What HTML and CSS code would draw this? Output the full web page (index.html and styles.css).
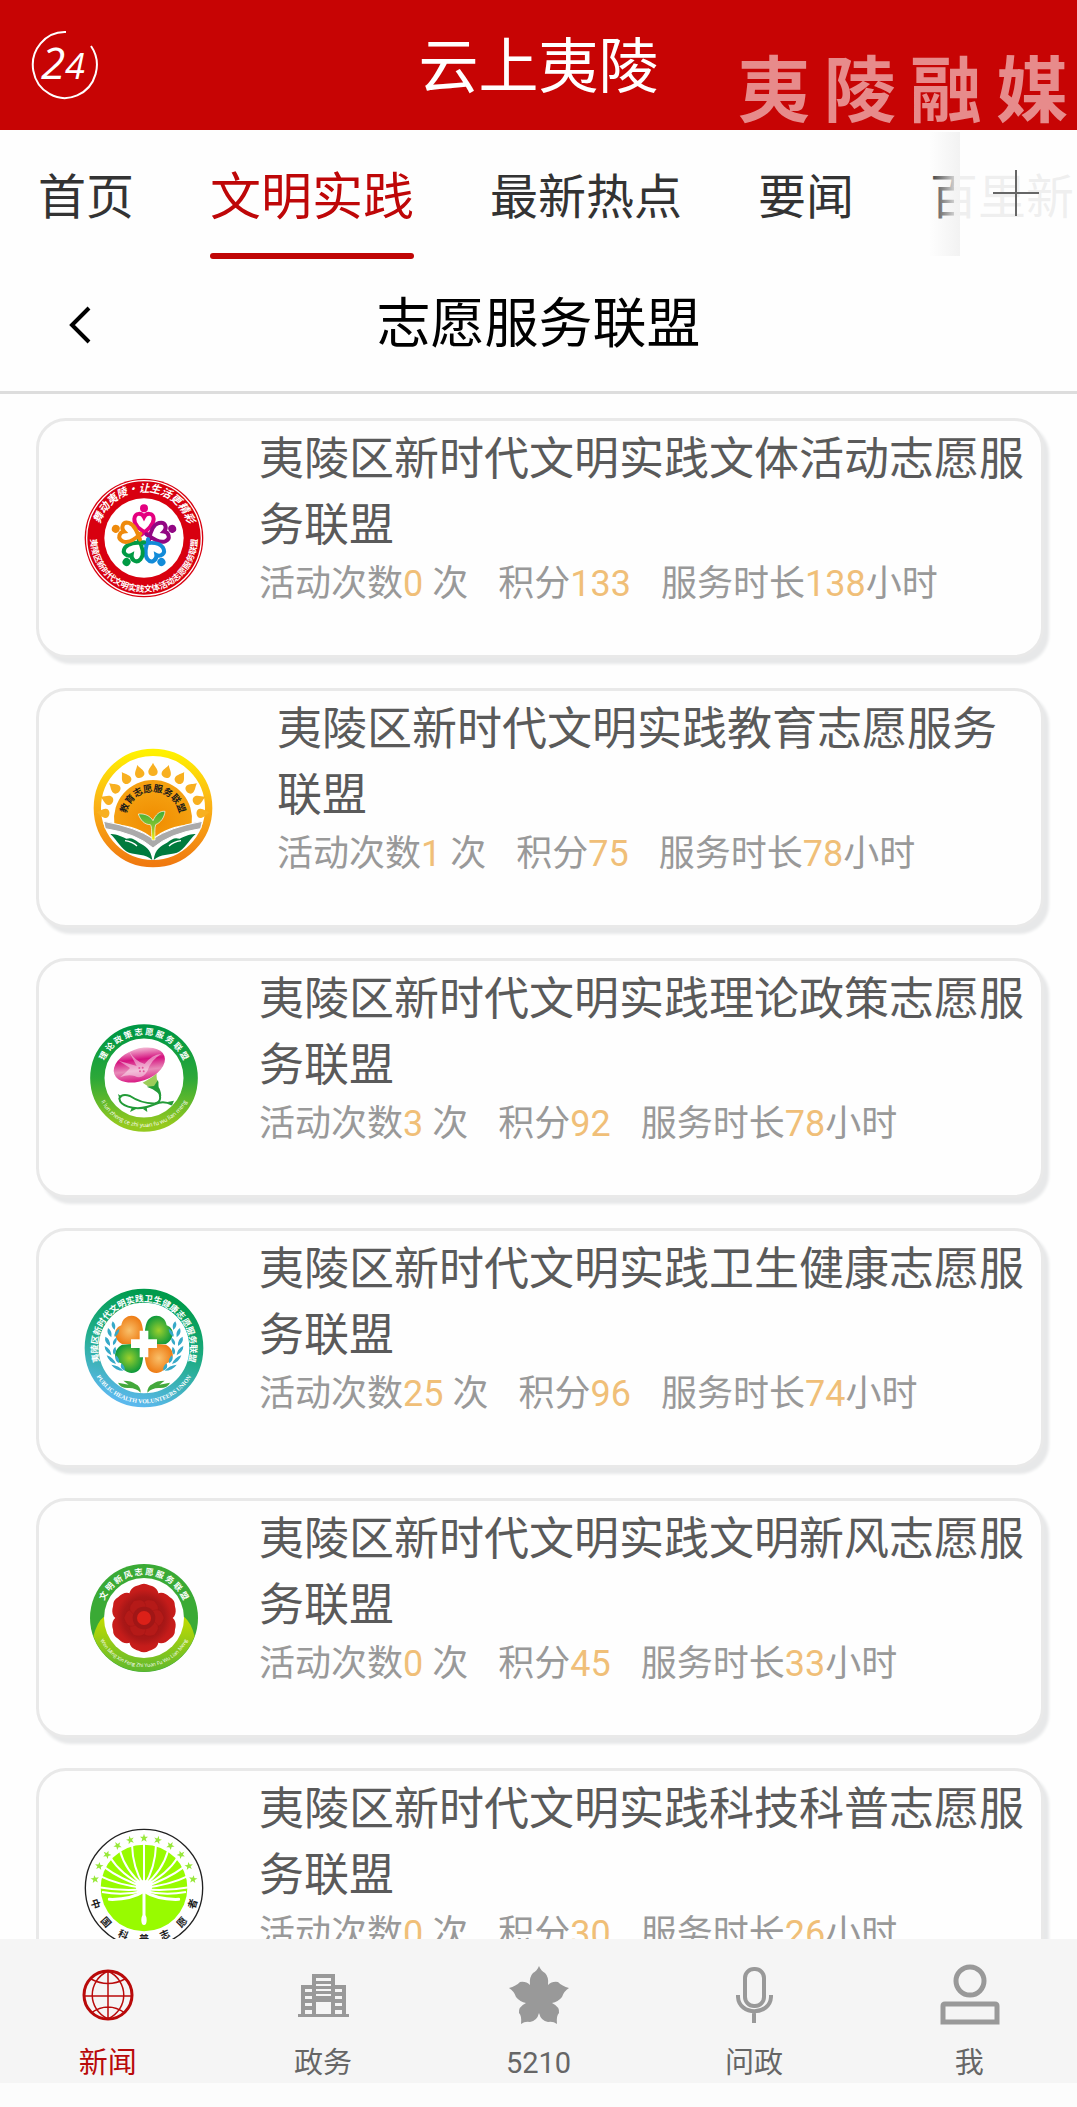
FILE: index.html
```html
<!DOCTYPE html>
<html lang="zh-CN">
<head>
    <meta charset="utf-8">
    <meta name="viewport" content="width=device-width, initial-scale=1">
    <title>云上夷陵</title>
    <link rel="stylesheet" href="styles.css">
</head>
<body>
    <header class="header">
        <svg class="clock" viewBox="0 0 70 70">
            <path d="M35 2A32 33 0 1 0 60 16" fill="none" stroke="#fff" stroke-width="2"/>
            <text x="10" y="49" font-size="44">2</text>
            <text x="34" y="49" font-size="36">4</text>
        </svg>
        <h1 class="app-title">云上夷陵</h1>
        <div class="brand"><span>夷</span><span>陵</span><span>融</span><span>媒</span></div>
    </header>

    <nav class="tabs">
        <a class="tab" href="#">首页</a>
        <a class="tab active" href="#">文明实践</a>
        <a class="tab" href="#">最新热点</a>
        <a class="tab" href="#">要闻</a>
        <a class="tab" href="#">百里新</a>
        <button class="add" type="button" aria-label="更多">
            <svg viewBox="0 0 46 46" width="46" height="46"><path d="M0 23H46M23 0V46" stroke="#666" stroke-width="2"/></svg>
        </button>
    </nav>

    <div class="page-bar">
        <button class="back" type="button" aria-label="返回">
            <svg viewBox="0 0 24 38" width="24" height="38"><path d="M21 2L4 19L21 36" fill="none" stroke="#000" stroke-width="4"/></svg>
        </button>
        <h2 class="page-title">志愿服务联盟</h2>
    </div>

    <main class="list">
        <!-- 文体活动 -->
        <article class="card">
            <div class="logo">
                <svg viewBox="-180 -180 360 360">
                    <defs>
                        <path id="a1" d="M-136 22A138 138 0 1 1 136 22"/>
                        <path id="a2" d="M-159 -16A160 160 0 1 0 159 -16"/>
                        <g id="heart" fill="none" stroke-width="12" stroke-linecap="round">
                            <path d="M9 -14C-8 -22 -30 -38 -29 -57C-27 -78 -6 -75 0 -63C6 -75 28 -78 29 -57C29 -40 12 -26 -8 -10"/>
                        </g>
                    </defs>
                    <circle r="178" fill="#d8000f"/>
                    <circle r="172" fill="none" stroke="#fff" stroke-width="4"/>
                    <circle r="119" fill="#fff"/>
                    <g stroke="#e4007f" fill="#e4007f"><use href="#heart"/><circle cy="-89" r="12" stroke="none"/></g>
                    <g stroke="#920783" fill="#920783" transform="rotate(72)"><use href="#heart"/><circle cy="-89" r="12" stroke="none"/></g>
                    <g stroke="#128bd8" fill="#128bd8" transform="rotate(144)"><use href="#heart"/><circle cy="-89" r="12" stroke="none"/></g>
                    <g stroke="#009a44" fill="#009a44" transform="rotate(216)"><use href="#heart"/><circle cy="-89" r="12" stroke="none"/></g>
                    <g stroke="#ee8a0c" fill="#ee8a0c" transform="rotate(288)"><use href="#heart"/><circle cy="-89" r="12" stroke="none"/></g>
                    <text class="seal-text slant" font-size="32" fill="#fff"><textPath href="#a1" startOffset="50%">舞动夷陵·让生活更精彩</textPath></text>
                    <text class="seal-text" font-size="25" fill="#fff"><textPath href="#a2" startOffset="50%">夷陵区新时代文明实践文体活动志愿服务联盟</textPath></text>
                </svg>
            </div>
            <div class="info">
                <h3 class="name">夷陵区新时代文明实践文体活动志愿服务联盟</h3>
                <p class="meta"><span>活动次数<b>0</b> 次</span><span>积分<b>133</b></span><span>服务时长<b>138</b>小时</span></p>
            </div>
        </article>

        <!-- 教育 -->
        <article class="card">
            <div class="logo wide">
                <svg viewBox="-180 -180 360 360">
                    <defs>
                        <linearGradient id="g2" x2="0" y2="1"><stop stop-color="#fff100"/><stop offset=".45" stop-color="#fbb416"/><stop offset="1" stop-color="#f07a10"/></linearGradient>
                        <radialGradient id="s2" cy=".7"><stop stop-color="#f08c00"/><stop offset="1" stop-color="#f5a010"/></radialGradient>
                        <linearGradient id="p2" x2="0" y2="1"><stop stop-color="#3fae36"/><stop offset=".6" stop-color="#8fc731"/><stop offset="1" stop-color="#fff100"/></linearGradient>
                        <path id="b1" d="M-81 32A81 81 0 0 1 81 32"/>
                        <path id="drop" d="M0 -172C4 -162 14 -154 14 -144C14 -128 -14 -128 -14 -144C-14 -154 -4 -162 0 -172Z"/>
                    </defs>
                    <circle r="167" fill="#fff" stroke="url(#g2)" stroke-width="22"/>
                    <g fill="#f8b020" transform="translate(0 36)">
                        <use href="#drop"/><use href="#drop" transform="rotate(16)"/><use href="#drop" transform="rotate(-16)"/>
                        <use href="#drop" transform="rotate(33)"/><use href="#drop" transform="rotate(-33)"/>
                        <use href="#drop" transform="rotate(50)"/><use href="#drop" transform="rotate(-50)"/>
                        <use href="#drop" transform="rotate(66)"/><use href="#drop" transform="rotate(-66)"/>
                        <use href="#drop" transform="rotate(82)"/><use href="#drop" transform="rotate(-82)"/>
                    </g>
                    <path d="M-116 48A117 117 0 1 1 116 48Q40 54 0 92Q-40 54 -116 48Z" fill="url(#s2)"/>
                    <path d="M-148 40Q-50 58 0 92Q50 58 148 40L143 62Q50 76 0 120Q-50 76 -143 62Z" fill="#aaa" stroke="#fff" stroke-width="3"/>
                    <path d="M-3 96C-6 70 -2 58 -8 50C-26 50 -38 36 -44 18C-24 16 -8 24 0 38C8 20 20 8 36 10C34 30 22 44 8 50C4 62 6 76 6 96Z" fill="url(#p2)" stroke="#fff" stroke-width="2"/>
                    <g fill="#007a3d">
                        <path d="M-128 78C-114 76 -92 86 -80 92C-64 88 -58 92 -42 104C-24 114 -6 122 -2 156C-24 136 -48 142 -72 134C-96 124 -106 98 -128 78Z"/>
                        <path d="M128 78C114 76 92 86 80 92C64 88 58 92 42 104C24 114 6 122 2 156C24 136 48 142 72 134C96 124 106 98 128 78Z"/>
                    </g>
                    <path d="M-84 98Q-60 102 -48 114M84 98Q60 102 48 114" fill="none" stroke="#fff" stroke-width="4"/>
                    <text class="seal-text" font-size="28" fill="#1a1a1a"><textPath href="#b1" startOffset="50%">教育志愿服务联盟</textPath></text>
                </svg>
            </div>
            <div class="info">
                <h3 class="name">夷陵区新时代文明实践教育志愿服务联盟</h3>
                <p class="meta"><span>活动次数<b>1</b> 次</span><span>积分<b>75</b></span><span>服务时长<b>78</b>小时</span></p>
            </div>
        </article>

        <!-- 理论政策 -->
        <article class="card">
            <div class="logo">
                <svg viewBox="-180 -180 360 360">
                    <defs>
                        <linearGradient id="g3" x2="0" y2="1"><stop stop-color="#009844"/><stop offset=".5" stop-color="#2ca838"/><stop offset="1" stop-color="#94c91f"/></linearGradient>
                        <linearGradient id="f3" x1=".7" x2=".3" y2="1"><stop stop-color="#f6c9dc"/><stop offset=".35" stop-color="#d5117f"/><stop offset=".65" stop-color="#e88bb9"/><stop offset="1" stop-color="#d70c7d"/></linearGradient>
                        <path id="c1" d="M-125 36A130 130 0 1 1 125 36"/>
                        <path id="c2" d="M-147 0A147 147 0 0 0 147 0"/>
                    </defs>
                    <circle r="140" fill="#fff" stroke="url(#g3)" stroke-width="43"/>
                    <path d="M-4 14Q24 0 38 -14Q36 6 44 12L40 32L14 26Z" fill="#9ccc5a"/>
                    <ellipse cx="-14" cy="-39" rx="80" ry="48" transform="rotate(-20 -14 -39)" fill="url(#f3)"/>
                    <path d="M-76 -52L-22 -36L-46 -82Q-26 -50 2 -42Q24 -70 52 -72Q20 -54 10 -20Q-6 6 -28 -6Q-48 -12 -72 -2Q-50 -20 -42 -30Z" fill="#fff" opacity=".45"/>
                    <g fill="#e5559d"><circle cx="-14" cy="-30" r="3"/><circle cx="-4" cy="-31" r="3"/><circle cx="-12" cy="-20" r="3"/><circle cx="-1" cy="-20" r="3"/></g>
                    <path d="M36 24Q62 68 34 76Q-6 78 -42 54Q-68 46 -74 62Q-72 78 -48 86Q-10 98 34 78Q58 66 84 80" fill="none" stroke="#239b38" stroke-width="6"/>
                    <path d="M8 26L30 24L42 6L44 28Q50 36 52 54L38 42L26 34ZM-74 62L-78 48L-66 56ZM-36 88L-42 102L-22 92ZM-4 92L10 102L8 88ZM70 72L90 68L84 82Z" fill="#239b38"/>
                    <text class="seal-text" font-size="25" fill="#fff"><textPath href="#c1" startOffset="50%">理 论 政 策 志 愿 服 务 联 盟</textPath></text>
                    <text class="seal-text latin" font-size="17" fill="#fff"><textPath href="#c2" startOffset="50%">li lun zheng ce zhi yuan fu wu lian meng</textPath></text>
                </svg>
            </div>
            <div class="info">
                <h3 class="name">夷陵区新时代文明实践理论政策志愿服务联盟</h3>
                <p class="meta"><span>活动次数<b>3</b> 次</span><span>积分<b>92</b></span><span>服务时长<b>78</b>小时</span></p>
            </div>
        </article>

        <!-- 卫生健康 -->
        <article class="card">
            <div class="logo">
                <svg viewBox="-180 -180 360 360">
                    <defs>
                        <linearGradient id="g4" x1=".6" x2=".3" y2="1"><stop stop-color="#009b4c"/><stop offset=".5" stop-color="#22ad8c"/><stop offset="1" stop-color="#5bb8ec"/></linearGradient>
                        <radialGradient id="o4"><stop stop-color="#f9c06a"/><stop offset="1" stop-color="#ee7d16"/></radialGradient>
                        <radialGradient id="n4"><stop stop-color="#9ed02c"/><stop offset="1" stop-color="#0f9a3c"/></radialGradient>
                        <path id="d1" d="M-120 70A139 139 0 1 1 120 70"/>
                        <path id="d2" d="M-166 0A166 166 0 0 0 166 0"/>
                        <path id="clover" d="M-2 -8L-66 -12C-92 -26 -94 -58 -68 -68C-64 -100 -28 -106 -12 -84C0 -66 -2 -30 -2 -8Z"/>
                        <path id="laurel" d="M-94 -80Q-102 -66 -88 -54Q-82 -70 -94 -80ZM-108 -60Q-114 -42 -98 -32Q-94 -50 -108 -60ZM-116 -34Q-120 -16 -102 -6Q-100 -26 -116 -34ZM-118 -6Q-118 12 -98 22Q-100 2 -118 -6ZM-112 22Q-106 42 -84 48Q-92 28 -112 22ZM-98 50Q-86 68 -62 68Q-76 52 -98 50ZM-74 -58Q-92 -48 -88 -34Q-74 -42 -74 -58ZM-82 -32Q-98 -20 -92 -8Q-80 -16 -82 -32ZM-86 -4Q-98 8 -90 20Q-80 12 -86 -4ZM-84 22Q-90 36 -76 46Q-70 34 -84 22ZM-68 46Q-74 62 -58 68Q-56 54 -68 46Z"/>
                    </defs>
                    <circle r="157" fill="#fff" stroke="url(#g4)" stroke-width="42"/>
                    <use href="#clover" fill="url(#o4)"/>
                    <use href="#clover" fill="url(#n4)" transform="scale(-1 1)"/>
                    <use href="#clover" fill="url(#n4)" transform="translate(0 -22) scale(1 -1)"/>
                    <use href="#clover" fill="url(#o4)" transform="translate(0 -22) scale(-1 -1)"/>
                    <path d="M-13 -52H13V-26H39V0H13V28H-13V0H-39V-26H-13Z" fill="#fff"/>
                    <use href="#laurel" fill="#36a9c8"/>
                    <use href="#laurel" fill="#36a9c8" transform="scale(-1 1)"/>
                    <path id="palm" d="M-78 104L-46 110L-62 98Q-36 98 -26 108Q-10 114 -10 134Q-24 120 -44 120Q-70 122 -78 104Z" fill="#43a83c"/>
                    <use href="#palm" transform="scale(-1 1)"/>
                    <text class="seal-text serif" font-size="26" fill="#fff"><textPath href="#d1" startOffset="50%">夷陵区新时代文明实践卫生健康志愿服务联盟</textPath></text>
                    <text class="seal-text serif" font-size="18" fill="#fff"><textPath href="#d2" startOffset="50%">PUBLIC HEALTH VOLUNTEERS UNION</textPath></text>
                </svg>
            </div>
            <div class="info">
                <h3 class="name">夷陵区新时代文明实践卫生健康志愿服务联盟</h3>
                <p class="meta"><span>活动次数<b>25</b> 次</span><span>积分<b>96</b></span><span>服务时长<b>74</b>小时</span></p>
            </div>
        </article>

        <!-- 文明新风 -->
        <article class="card">
            <div class="logo">
                <svg viewBox="-180 -180 360 360">
                    <defs>
                        <linearGradient id="g5" x2="0" y2="1"><stop stop-color="#c3dc00"/><stop offset="1" stop-color="#5fb82e"/></linearGradient>
                        <radialGradient id="r5" gradientUnits="userSpaceOnUse" cx="0" cy="0" r="105"><stop stop-color="#d41f1c"/><stop offset=".3" stop-color="#a01515"/><stop offset=".6" stop-color="#a81717"/><stop offset=".8" stop-color="#c41c1a"/><stop offset="1" stop-color="#cc1c1a"/></radialGradient>
                        <path id="petal" d="M-22 -30C-58 -66 -44 -92 -16 -98Q0 -108 16 -98C44 -92 58 -66 22 -30Z"/>
                        <path id="petal-in" d="M-14 -14C-36 -44 -20 -54 0 -60C20 -54 36 -44 14 -14Z"/>
                    </defs>
                    <circle r="162" fill="#3aaa35"/>
                    <path d="M-152 55Q-140 10 -120 -4Q-100 60 0 84Q100 60 120 -4Q142 14 152 55A162 162 0 0 1 -152 55Z" fill="url(#g5)"/>
                    <circle r="120" fill="#fff"/>
                    <g fill="url(#r5)">
                        <use href="#petal"/><use href="#petal" transform="rotate(60)"/><use href="#petal" transform="rotate(120)"/>
                        <use href="#petal" transform="rotate(180)"/><use href="#petal" transform="rotate(240)"/><use href="#petal" transform="rotate(300)"/>
                    </g>
                    <g fill="#b51a18" stroke="#9c1515" stroke-width="1">
                        <use href="#petal-in" transform="rotate(30)"/><use href="#petal-in" transform="rotate(90)"/><use href="#petal-in" transform="rotate(150)"/>
                        <use href="#petal-in" transform="rotate(210)"/><use href="#petal-in" transform="rotate(270)"/><use href="#petal-in" transform="rotate(330)"/>
                    </g>
                    <circle r="34" fill="#a01616"/>
                    <circle r="21" fill="#dc2018"/>
                    <text class="seal-text" font-size="25" fill="#fff"><textPath href="#c1" startOffset="50%">文 明 新 风 志 愿 服 务 联 盟</textPath></text>
                    <text class="seal-text latin" font-size="15" fill="#fff"><textPath href="#c2" startOffset="50%">Wen Ming Xin Feng Zhi Yuan Fu Wu Lian Meng</textPath></text>
                </svg>
            </div>
            <div class="info">
                <h3 class="name">夷陵区新时代文明实践文明新风志愿服务联盟</h3>
                <p class="meta"><span>活动次数<b>0</b> 次</span><span>积分<b>45</b></span><span>服务时长<b>33</b>小时</span></p>
            </div>
        </article>

        <!-- 科技科普 -->
        <article class="card">
            <div class="logo">
                <svg viewBox="-180 -180 360 360">
                    <defs>
                        <path id="star" d="M0 -163L3 -154L12 -154L5 -148L8 -139L0 -144L-8 -139L-5 -148L-12 -154L-3 -154Z"/>
                    </defs>
                    <circle r="176" fill="#fff" stroke="#222" stroke-width="4"/>
                    <circle r="130" fill="#98fb00"/>
                    <g fill="#98e83a">
                        <use href="#star"/><use href="#star" transform="rotate(16)"/><use href="#star" transform="rotate(-16)"/>
                        <use href="#star" transform="rotate(32)"/><use href="#star" transform="rotate(-32)"/>
                        <use href="#star" transform="rotate(48)"/><use href="#star" transform="rotate(-48)"/>
                        <use href="#star" transform="rotate(64)"/><use href="#star" transform="rotate(-64)"/>
                        <use href="#star" transform="rotate(80)"/><use href="#star" transform="rotate(-80)"/>
                    </g>
                    <g fill="none" stroke="#fff" stroke-width="6">
                        <path d="M0 -6V-134"/>
                        <path id="rays" d="M0 -6Q34 -60 36 -130M0 -6Q56 -52 72 -112M0 -4Q72 -44 100 -90M0 -2Q76 -30 118 -62M0 0Q80 -10 128 -34M0 4Q70 10 136 -2M0 8Q60 24 126 12"/>
                        <use href="#rays" transform="scale(-1 1)"/>
                        <path d="M0 10Q40 36 104 34M0 10Q-40 36 -104 34" stroke-width="9" stroke-linecap="round"/>
                        <path d="M0 0V96" stroke-width="9"/>
                    </g>
                    <ellipse cy="-4" rx="25" ry="20" fill="#fff"/>
                    <ellipse cy="96" rx="8" ry="15" fill="#fff"/>
                    <g class="seal-text" font-size="30" fill="#222">
                        <text y="164" transform="rotate(72)">中</text>
                        <text y="164" transform="rotate(48)">国</text>
                        <text y="164" transform="rotate(24)">科</text>
                        <text y="164">普</text>
                        <text y="164" transform="rotate(-24)">志</text>
                        <text y="164" transform="rotate(-48)">愿</text>
                        <text y="164" transform="rotate(-72)">者</text>
                    </g>
                </svg>
            </div>
            <div class="info">
                <h3 class="name">夷陵区新时代文明实践科技科普志愿服务联盟</h3>
                <p class="meta"><span>活动次数<b>0</b> 次</span><span>积分<b>30</b></span><span>服务时长<b>26</b>小时</span></p>
            </div>
        </article>
    </main>

    <nav class="bottom-nav">
        <a class="nav-item active" href="#">
            <svg viewBox="0 0 62 62" fill="none" stroke="currentColor">
                <circle cx="31" cy="32" r="24" stroke-width="3"/>
                <path d="M31 8V56M7 33H55M31 8C10 18 10 46 31 56M31 8C52 18 52 46 31 56M14 16Q31 25 48 16M14 50Q31 38 48 50" stroke-width="1.5"/>
            </svg>
            新闻
        </a>
        <a class="nav-item" href="#">
            <svg viewBox="0 0 62 62">
                <path fill="currentColor" fill-rule="evenodd" d="M20 11H43V22H54V51H57V54H6V51H9V22H20ZM24 15V18H39V15ZM24 21V23H39V21ZM24 26V28H39V26ZM24 31V33H39V31ZM24 39V51H39V39ZM13 26V29H20V26ZM13 33V36H20V33ZM13 40V43H20V40ZM13 47V51H20V47ZM43 26V29H50V26ZM43 33V36H50V33ZM43 40V43H50V40ZM43 47V51H50V47Z"/>
            </svg>
            政务
        </a>
        <a class="nav-item" href="#">
            <svg viewBox="0 0 62 62">
                <path fill="currentColor" d="M31 3Q33 8 37 10Q41 14 40 22Q44 18 50 19Q54 23 61 25Q56 28 54 34Q50 39 44 40Q52 44 51 50Q48 53 49 61Q45 58 40 59Q33 58 31 50Q29 58 22 59Q17 58 13 61Q14 53 11 50Q10 44 18 40Q12 39 8 34Q6 28 1 25Q8 23 12 19Q18 18 22 22Q21 14 25 10Q29 8 31 3Z"/>
            </svg>
            5210
        </a>
        <a class="nav-item" href="#">
            <svg viewBox="0 0 62 62" fill="none" stroke="currentColor">
                <rect x="22" y="6" width="19" height="37" rx="9" stroke-width="4"/>
                <path d="M15 32V34C16 53 47 53 48 34V32M31 48V60" stroke-width="4"/>
            </svg>
            问政
        </a>
        <a class="nav-item" href="#">
            <svg viewBox="0 0 62 62" fill="none" stroke="currentColor" stroke-width="5">
                <circle cx="32" cy="18" r="14"/>
                <path d="M5 59V43Q5 41 7 41H57Q59 41 59 43V59Z"/>
            </svg>
            我
        </a>
    </nav>
</body>
</html>
```
FILE: styles.css
```css
* {
    box-sizing: border-box;
}
body {
    margin: 0;
    height: 100vh;
    display: flex;
    flex-direction: column;
    overflow: hidden;
    background: #fefefe;
    font-family: Roboto, "Noto Sans CJK SC", sans-serif;
}
h1, h2, h3, p {
    margin: 0;
    font-weight: normal;
}
a {
    text-decoration: none;
}
button {
    border: none;
    background: none;
    padding: 0;
    cursor: pointer;
}

/* header */
.header {
    flex: none;
    display: grid;
    grid-template-columns: 1fr auto 1fr;
    align-items: center;
    height: 130px;
    background: #c70404;
    color: #fff;
}
.clock {
    width: 70px;
    height: 70px;
    margin-left: 31px;
}
.clock text {
    font-family: "Open Sans", sans-serif;
    font-style: italic;
    fill: #fff;
}
.app-title {
    padding-top: 6px;
    font-size: 60px;
    line-height: 90px;
}
.brand {
    display: flex;
    align-self: end;
    justify-content: flex-end;
    gap: 14px;
    padding-right: 9px;
    font-size: 72px;
    font-weight: bold;
    line-height: 76px;
    color: #e78b8b;
}

/* channel tabs */
.tabs {
    flex: none;
    position: relative;
    display: flex;
    gap: 76px;
    padding-left: 38px;
    overflow: hidden;
    white-space: nowrap;
}
.tab {
    padding-top: 38px;
    font-size: 48px;
    line-height: 60px;
    color: #333;
}
.tab.active {
    font-size: 51px;
    color: #be0708;
}
.tab.active::after {
    content: "";
    display: block;
    height: 6px;
    margin-top: 25px;
    border-radius: 3px;
    background: #c00606;
}
.add {
    position: absolute;
    top: 2px;
    right: 0;
    width: 123px;
    height: 124px;
    background: rgba(254, 254, 254, 0.93);
}
.add::before {
    content: "";
    position: absolute;
    top: 0;
    left: -25px;
    width: 31px;
    height: 124px;
    background: linear-gradient(to right, rgba(242, 242, 242, 0), #f2f2f2);
}

/* page title bar */
.page-bar {
    flex: none;
    display: grid;
    grid-template-columns: 1fr auto 1fr;
    align-items: center;
    height: 135px;
    border-bottom: 3px solid #ddd;
}
.back {
    justify-self: start;
    margin-left: 68px;
    line-height: 0;
}
.page-title {
    font-size: 54px;
    line-height: 80px;
    color: #000;
}

/* list */
.list {
    flex: 1;
    min-height: 0;
    overflow: hidden;
    padding: 24px 33px 0 36px;
}
.card {
    display: flex;
    height: 240px;
    margin-bottom: 30px;
    border: 3px solid #e9e9e9;
    border-radius: 30px;
    background: #fefefe;
    box-shadow: 5px 6px 3px #e7e8e9;
}
.logo {
    flex: none;
    display: flex;
    align-items: center;
    justify-content: center;
    width: 210px;
}
.logo.wide {
    width: 228px;
}
.logo svg {
    width: 120px;
    height: 120px;
}
.seal-text {
    font-family: "Noto Sans CJK SC", sans-serif;
    font-weight: bold;
    text-anchor: middle;
}
.seal-text.slant {
    font-style: italic;
}
.seal-text.serif {
    font-family: "Liberation Serif", "Noto Sans CJK SC", serif;
}
.seal-text.latin {
    font-family: "Open Sans", sans-serif;
    font-weight: normal;
}
.info {
    flex: 1;
    padding: 6px 0 0 10px;
}
.name {
    font-size: 45px;
    line-height: 66px;
    color: #5a5a5a;
}
.meta {
    display: flex;
    gap: 30px;
    font-size: 36px;
    line-height: 50px;
    white-space: nowrap;
    color: #999;
}
.meta b {
    font-weight: normal;
    color: #f0bf78;
}

/* bottom navigation */
.bottom-nav {
    flex: none;
    display: flex;
    border-bottom: 24px solid #fcfcfc;
    background: #f5f5f5;
}
.nav-item {
    flex: 1;
    display: flex;
    flex-direction: column;
    align-items: center;
    gap: 18px;
    padding: 24px 0 0;
    font-size: 29px;
    line-height: 40px;
    color: #666;
}
.nav-item svg {
    width: 62px;
    height: 62px;
    color: #999;
}
.nav-item.active,
.nav-item.active svg {
    color: #b90a0a;
}
```
